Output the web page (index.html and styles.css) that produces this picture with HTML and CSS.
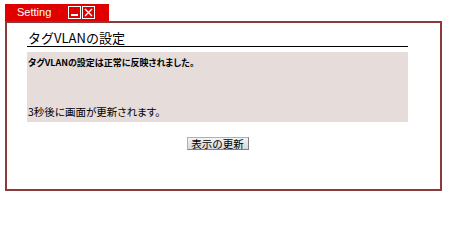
FILE: index.html
```html
<!DOCTYPE html>
<html lang="ja">
<head>
<meta charset="utf-8">
<title>Setting</title>
<link rel="stylesheet" href="styles.css">
</head>
<body>
<div class="tab">
  <span class="tab-title">Setting</span>
  <span class="tab-btns">
    <span class="tab-btn"><svg width="13" height="13" viewBox="0 0 13 13"><rect x="0.5" y="0.5" width="12" height="12" fill="none" stroke="#fff"/><rect x="3" y="8" width="7" height="2" fill="#fff"/></svg></span>
    <span class="tab-btn"><svg width="13" height="13" viewBox="0 0 13 13"><rect x="0.5" y="0.5" width="12" height="12" fill="none" stroke="#fff"/><path d="M3 3 L10 10 M10 3 L3 10" stroke="#fff" stroke-width="1.4"/></svg></span>
  </span>
</div>
<div class="window">
  <div class="content">
    <h1 class="heading">タグVLANの設定</h1>
    <div class="msgbox">
      <p class="msg-bold">タグVLANの設定は正常に反映されました。</p>
      <p class="msg">3秒後に画面が更新されます。</p>
    </div>
    <div class="actions">
      <button class="btn" type="button">表示の更新</button>
    </div>
  </div>
</div>
</body>
</html>
```

FILE: styles.css
```css
html, body {
  margin: 0;
  padding: 0;
  background: #ffffff;
}
body {
  font-family: "Noto Sans CJK JP", "Liberation Sans", sans-serif;
  color: #000;
}
.tab {
  margin: 4px 0 0 5px;
  width: 104px;
  height: 17px;
  background: #e00000;
  display: flex;
  align-items: center;
  box-sizing: border-box;
  padding-left: 12px;
}
.tab-title {
  font-family: "Liberation Sans", Arial, sans-serif;
  font-size: 11px;
  color: #fff;
  line-height: 13px;
}
.tab-btns {
  display: flex;
  gap: 1px;
  margin-left: 17px;
}
.tab-btn {
  display: block;
  width: 13px;
  height: 13px;
}
.tab-btn svg { display: block; }
.window {
  margin-left: 5px;
  width: 437px;
  height: 170px;
  box-sizing: border-box;
  border: 2px solid #8a3a3a;
}
.content {
  padding: 6px 32px 0 20px;
}
.heading {
  margin: 0;
  font-size: 13px;
  font-weight: normal;
  line-height: 17px;
  height: 17px;
  border-bottom: 1px solid #000;
  padding-left: 1px;
}
.msgbox {
  margin-top: 5px;
  height: 70px;
  box-sizing: border-box;
  background: #e6dcda;
  padding: 5px 2px 4px 1px;
  display: flex;
  flex-direction: column;
  justify-content: space-between;
}
.msgbox p { margin: 0; }
.msg-bold {
  font-size: 9px;
  font-weight: bold;
  line-height: 12px;
  font-feature-settings: "palt";
}
.msg {
  font-size: 10.5px;
  line-height: 12px;
  font-feature-settings: "palt";
}
.actions {
  display: flex;
  justify-content: center;
  margin-top: 15px;
}
.btn {
  font-family: "Noto Sans CJK JP", sans-serif;
  font-size: 10.5px;
  line-height: 10px;
  height: 13px;
  width: 62px;
  padding: 0;
  border: 1px solid #808080;
  border-top-color: #b0b0b0;
  border-left-color: #b0b0b0;
  background: linear-gradient(#f4f4f4, #d8d8d8);
  color: #000;
  border-radius: 0;
}
```
